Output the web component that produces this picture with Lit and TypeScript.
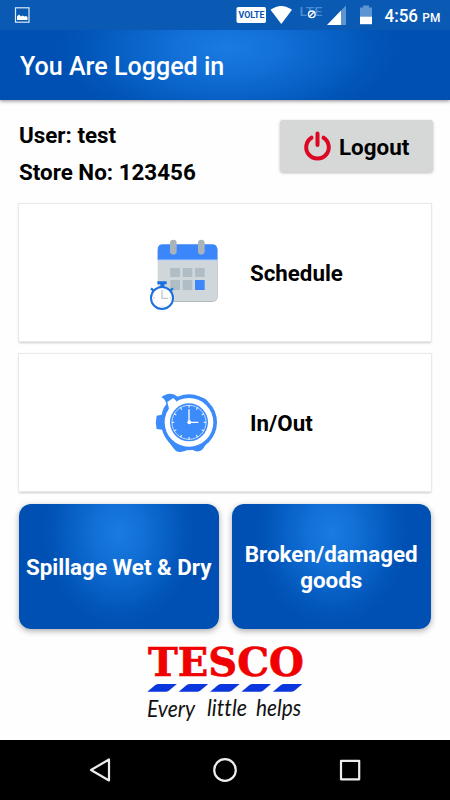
import { LitElement, html, css, svg } from "lit";
import { customElement, property } from "lit/decorators.js";

const scheduleIcon = html`<svg width="90" height="90" viewBox="0 0 270 270">
  <rect x="54" y="46" width="180" height="170" rx="17" fill="#b5babc"/>
  <path d="M53 60h180v137q0 16-16 16H69q-16 0-16-16z" fill="#cfd7db"/>
  <path d="M53 91V59q0-16 16-16h147q16 0 16 16v32z" fill="#3c86fb"/>
  <path d="M53 90h180" stroke="#e8edf3" stroke-width="2"/>
  ${[100, 184].map((x) => svg`<rect x=${x - 10} y="29" width="20" height="45" rx="10" fill="#a9b4ba"/>`)}
  ${[0, 1, 2, 3, 4, 5].map(
    (i) => svg`<rect x=${91 + (i % 3) * 37} y=${i < 3 ? 114 : 150} width="29" height=${i < 3 ? 27 : 30}
      fill=${i === 5 ? "#3c86fb" : "#b0bdc4"}/>`
  )}
  <path d="M52 154h28v9H52zM61 161h12v14H61z" fill="#1b70e0"/>
  <path d="M33 175l9 8M99 175l-9 8" stroke="#1b70e0" stroke-width="7"/>
  <circle cx="66" cy="204" r="33" fill="#fff" stroke="#1b70e0" stroke-width="6"/>
  <path d="M66 180v25h18" fill="none" stroke="#bfc8ce" stroke-width="4"/>
  <path d="M40 204h5M66 227v5M88 204h5" stroke="#9aa8b2" stroke-width="2"/>
</svg>`;

const watchIcon = html`<svg width="90" height="90" viewBox="0 0 270 270">
  <g fill="#3c8bfa">
    <circle cx="147" cy="127" r="84"/>
    <path d="M64 52Q75 41 91 41Q104 41 111 49L130 60L84 110L70 120L67 149L50 147Q45 128 50 107L65 104
      Q69 83 79 73Q76 56 64 52Z"/>
    <path d="M160 45Q178 50 188 53Q203 57 206 71L216 95L180 90Z"/>
    <path d="M67 145L228 145Q224 158 217 165L188 208Q180 217 165 213Q155 206 146 208Q132 217 119 216
      Q108 217 103 208L80 178Q72 168 67 145Z"/>
  </g>
  <circle cx="147" cy="127" r="73" fill="#fff"/>
  <path d="M82 66l18-12 9 9-3 13-18 15z" fill="#fff"/>
  <circle cx="147" cy="127" r="57" fill="#3c8bfa"/>
  <circle cx="147" cy="127" r="51" fill="none" stroke="#fff" stroke-width="2"/>
  ${Array.from({ length: 12 }, (_, i) => svg`<path d="M147 75v8" stroke="#fff" stroke-width="3" transform="rotate(${i * 30} 147 127)"/>`)}
  <path d="M147 88v39h28" fill="none" stroke="#fff" stroke-width="4"/>
  <circle cx="148" cy="127" r="6" fill="#fff"/>
</svg>`;

@customElement("status-bar")
class StatusBar extends LitElement {
  static styles = css`
    :host { display: block; height: 30px; background: #0a59b3; position: relative; }
    svg { display: block; font-family: Roboto, sans-serif; }
  `;
  render() {
    return html`<svg width="450" height="30" fill="#fff">
      <rect x="15.5" y="7.8" width="13.5" height="14.4" fill="none" stroke="#dce8f6" stroke-width="1.2"/>
      <path d="M17 20v-3.500l2-2 2 2 1.500-1 2 1 1.500-.5 1.500 1v3z"/>
      <rect x="236.500" y="7" width="29.500" height="16" rx="1.800"/>
      <text x="238.500" y="18.300" font-size="9.500" font-weight="700" fill="#0753b5" textLength="26" lengthAdjust="spacingAndGlyphs">VOLTE</text>
      <path d="M270.500 9.800Q281.300 2 292 9.800L281.300 24z"/>
      <text x="299.500" y="16" font-size="13.500" font-weight="500" fill="#4b8bd2" textLength="23" lengthAdjust="spacingAndGlyphs">LTE</text>
      <circle cx="311.800" cy="14.300" r="4.500" fill="#0a59b3"/>
      <circle cx="311.800" cy="14.300" r="3.300" fill="none" stroke="#fff" stroke-width="1.400"/>
      <path d="M309.800 16.300l4-4" stroke="#fff" stroke-width="1.300"/>
      <path d="M327 25L341 10.500V25z"/><path d="M341 10.500l5-5V25h-5z" fill="#5d94d2"/>
      <path d="M360 7.500h3V5.500h6v2h3V17h-12z" fill="#5d94d2"/><path d="M360 16.700h12v7.500h-12z"/>
      <text x="384.500" y="22" font-size="18" font-weight="500" textLength="33.500" lengthAdjust="spacingAndGlyphs">4:56</text>
      <text x="422.300" y="22" font-size="12.300" font-weight="500" textLength="18" lengthAdjust="spacingAndGlyphs">PM</text>
    </svg>`;
  }
}

@customElement("menu-card")
class MenuCard extends LitElement {
  @property() label = "";
  static styles = css`
    :host { display: flex; align-items: center; box-sizing: border-box; height: 137px; padding-left: 121px;
      background: #fff; box-shadow: 0 0 1px 1px #e9e9e9, 0 2px 2px #c8c8c8; }
    .icon { width: 90px; height: 90px; margin-top: 5px; }
    .label { margin-left: 20px; margin-top: 1px; font-size: 22.3px; font-weight: 700; }
  `;
  render() {
    return html`<div class="icon"><slot></slot></div><div class="label">${this.label}</div>`;
  }
}

const mottoWords = [
  { word: "Every", x: 12, y: 82, width: 48 },
  { word: "little", x: 72, y: 80.5, width: 40 },
  { word: "helps", x: 121, y: 80.5, width: 45 },
];

@customElement("tesco-logo")
class TescoLogo extends LitElement {
  static styles = css`
    :host { display: block; width: 180px; height: 100px; }
    svg { display: block; }
    .name { font: 700 38.5px "DejaVu Serif", serif; fill: #f00000; stroke: #f00000; stroke-width: 0.6px; }
    .motto { font: italic 400 23px Lato, cursive; font-variant-ligatures: none; fill: #111; }
  `;
  render() {
    return html`<svg width="180" height="100">
      <text class="name" x="13" y="40.500" textLength="156" lengthAdjust="spacingAndGlyphs">TESCO</text>
      ${[0, 1, 2, 3, 4].map((i) => svg`<path transform="translate(${12.3 + i * 31.4} 49)" d="M0 7.700L8 1Q9.500 0 11 0H29.500L21.500 6.700Q20 7.700 18.500 7.700Z" fill="#0b35dd"/>`)}
      ${mottoWords.map((w) => svg`<text class="motto" x=${w.x} y=${w.y} textLength=${w.width} lengthAdjust="spacingAndGlyphs">${w.word}</text>`)}
    </svg>`;
  }
}

@customElement("app-root")
class AppRoot extends LitElement {
  static styles = css`
    :host { display: flex; flex-direction: column; width: 450px; height: 800px; overflow: hidden;
      background: #fefefe; color: #000; font-family: Roboto, sans-serif; }
    header { height: 70px; box-sizing: border-box; padding: 3px 20px 0; display: flex; align-items: center;
      background: radial-gradient(ellipse 175px 82px at 228px 18px, #1a7be2 0%, #1270d6 30%, #0861c7 60%, #0255b8 83%, #004fb2 100%);
      color: #fff; font-size: 25.1px; font-weight: 500; box-shadow: 0 1px 4px #0007; }
    main { flex: 1; padding: 20px 18px 0 19px; display: flex; flex-direction: column; }
    .account { display: flex; justify-content: space-between; height: 84px; font-size: 22.4px; font-weight: 700; }
    .info { line-height: 37px; margin-top: -3px; }
    .logout { box-sizing: border-box; width: 153px; height: 52px; margin-right: -1px; border-radius: 3px;
      background: #d6d8d7; box-shadow: 0 1px 3px #0004; display: flex; align-items: center; padding-left: 23px; gap: 7px; }
    .logout span { margin-top: 1px; }
    .cards { display: grid; gap: 13px; margin-right: 1px; }
    .tiles { display: grid; grid-template-columns: 199.500px 199.500px; gap: 13px; margin-top: 13px; }
    .tile { height: 124.500px; box-sizing: border-box; display: flex; align-items: center; justify-content: center; text-align: center;
      border-radius: 12px; color: #fff; font-size: 22.4px; line-height: 26px; font-weight: 700; padding-top: 2px;
      background: radial-gradient(ellipse 78px 96px at 50% 23%, #1a7be2 0%, #1270d6 30%, #0861c7 60%, #0255b8 83%, #004fb2 100%);
      box-shadow: 0 2px 6px #0005; }
    tesco-logo { margin: 6.500px 0 0 116px; }
    nav { height: 60px; background: #000; }
    nav svg { display: block; }
  `;
  render() {
    return html`
      <status-bar></status-bar>
      <header>You Are Logged in</header>
      <main>
        <section class="account">
          <div class="info"><div>User: test</div><div>Store No: 123456</div></div>
          <div class="logout">
            <svg width="29" height="32" fill="none" stroke="#dc0722" stroke-width="4" stroke-linecap="round">
              <path d="M8.500 7.700A11.300 11.300 0 1 0 20.500 7.700M14.500 3.500V15"/>
            </svg>
            <span>Logout</span>
          </div>
        </section>
        <section class="cards">
          <menu-card label="Schedule">${scheduleIcon}</menu-card>
          <menu-card label="In/Out">${watchIcon}</menu-card>
        </section>
        <section class="tiles">
          <div class="tile">Spillage Wet &amp; Dry</div>
          <div class="tile">Broken/damaged<br />goods</div>
        </section>
        <tesco-logo></tesco-logo>
      </main>
      <nav><svg width="450" height="60" fill="none" stroke="#ededed" stroke-width="2.200" stroke-linejoin="round">
        <path d="M91 30L109 19.500V40.500Z"/><circle cx="225" cy="30" r="10.800"/><rect x="341" y="20.800" width="18.200" height="18.500"/>
      </svg></nav>
    `;
  }
}
